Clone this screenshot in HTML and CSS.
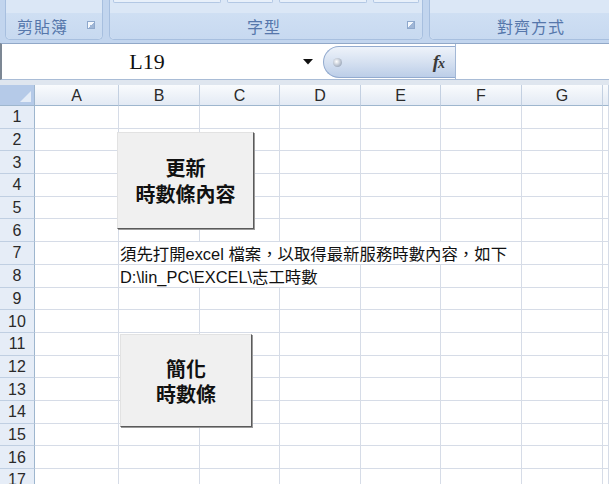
FILE: index.html
```html
<!DOCTYPE html>
<html lang="zh-Hant">
<head>
<meta charset="utf-8">
<title>Excel</title>
<link rel="stylesheet" href="styles.css">
</head>
<body>
<div class="ribbon">
  <div class="group g1">
    <div class="group-top"></div>
    <div class="group-label"><span class="label-text">剪貼簿</span><span class="launcher"></span></div>
  </div>
  <div class="group g2">
    <div class="group-top"><span class="tb w1"></span><span class="tb w2"></span><span class="tb w3"></span><span class="tb w2"></span></div>
    <div class="group-label"><span class="label-text center">字型</span><span class="launcher"></span></div>
  </div>
  <div class="group g3">
    <div class="group-top"></div>
    <div class="group-label"><span class="label-text center">對齊方式</span></div>
  </div>
</div>
<div class="formula-bar">
  <div class="namebox">
    <span class="name-text">L19</span>
    <svg class="arrow" width="10" height="6" viewBox="0 0 10 6"><path d="M0 0H10L5 5.5Z" fill="#111"/></svg>
  </div>
  <div class="pill">
    <span class="dot"></span>
    <span class="fx"><i>f</i><i class="fx-x">x</i></span>
  </div>
  <div class="formula-input"></div>
</div>
<div class="bar-gap"></div>
<div class="sheet">
  <div class="row header">
    <div class="corner"><svg width="11" height="11" viewBox="0 0 11 11"><path d="M11 0V11H0Z" fill="#e4ecf7"/></svg></div>
    <div class="ch">A</div><div class="ch">B</div><div class="ch">C</div><div class="ch">D</div><div class="ch">E</div><div class="ch">F</div><div class="ch">G</div><div class="ch"></div>
  </div>
  <div class="row"><div class="rh">1</div><div class="c"></div><div class="c"></div><div class="c"></div><div class="c"></div><div class="c"></div><div class="c"></div><div class="c"></div><div class="c"></div></div>
  <div class="row"><div class="rh">2</div><div class="c"></div><div class="c"></div><div class="c"></div><div class="c"></div><div class="c"></div><div class="c"></div><div class="c"></div><div class="c"></div></div>
  <div class="row"><div class="rh">3</div><div class="c"></div><div class="c"></div><div class="c"></div><div class="c"></div><div class="c"></div><div class="c"></div><div class="c"></div><div class="c"></div></div>
  <div class="row"><div class="rh">4</div><div class="c"></div><div class="c"></div><div class="c"></div><div class="c"></div><div class="c"></div><div class="c"></div><div class="c"></div><div class="c"></div></div>
  <div class="row"><div class="rh">5</div><div class="c"></div><div class="c"></div><div class="c"></div><div class="c"></div><div class="c"></div><div class="c"></div><div class="c"></div><div class="c"></div></div>
  <div class="row"><div class="rh">6</div><div class="c"></div><div class="c"></div><div class="c"></div><div class="c"></div><div class="c"></div><div class="c"></div><div class="c"></div><div class="c"></div></div>
  <div class="row"><div class="rh">7</div><div class="c"></div><div class="c text span5">須先打開excel 檔案，以取得最新服務時數內容，如下</div><div class="c"></div><div class="c"></div></div>
  <div class="row"><div class="rh">8</div><div class="c"></div><div class="c text span3">D:\lin_PC\EXCEL\志工時數</div><div class="c"></div><div class="c"></div><div class="c"></div><div class="c"></div></div>
  <div class="row"><div class="rh">9</div><div class="c"></div><div class="c"></div><div class="c"></div><div class="c"></div><div class="c"></div><div class="c"></div><div class="c"></div><div class="c"></div></div>
  <div class="row"><div class="rh">10</div><div class="c"></div><div class="c"></div><div class="c"></div><div class="c"></div><div class="c"></div><div class="c"></div><div class="c"></div><div class="c"></div></div>
  <div class="row"><div class="rh">11</div><div class="c"></div><div class="c"></div><div class="c"></div><div class="c"></div><div class="c"></div><div class="c"></div><div class="c"></div><div class="c"></div></div>
  <div class="row"><div class="rh">12</div><div class="c"></div><div class="c"></div><div class="c"></div><div class="c"></div><div class="c"></div><div class="c"></div><div class="c"></div><div class="c"></div></div>
  <div class="row"><div class="rh">13</div><div class="c"></div><div class="c"></div><div class="c"></div><div class="c"></div><div class="c"></div><div class="c"></div><div class="c"></div><div class="c"></div></div>
  <div class="row"><div class="rh">14</div><div class="c"></div><div class="c"></div><div class="c"></div><div class="c"></div><div class="c"></div><div class="c"></div><div class="c"></div><div class="c"></div></div>
  <div class="row"><div class="rh">15</div><div class="c"></div><div class="c"></div><div class="c"></div><div class="c"></div><div class="c"></div><div class="c"></div><div class="c"></div><div class="c"></div></div>
  <div class="row"><div class="rh">16</div><div class="c"></div><div class="c"></div><div class="c"></div><div class="c"></div><div class="c"></div><div class="c"></div><div class="c"></div><div class="c"></div></div>
  <div class="row"><div class="rh">17</div><div class="c"></div><div class="c"></div><div class="c"></div><div class="c"></div><div class="c"></div><div class="c"></div><div class="c"></div><div class="c"></div></div>

  <div class="btn btn-update"><span class="btn-line">更新</span><span class="btn-line">時數條內容</span></div>
  <div class="btn btn-simplify"><span class="btn-line">簡化</span><span class="btn-line">時數條</span></div>
</div>
</body>
</html>
```
FILE: styles.css
```css
* { box-sizing: border-box; }
html, body { margin: 0; padding: 0; }
body {
  width: 609px;
  height: 484px;
  overflow: hidden;
  background: #fff;
  font-family: "Liberation Sans", Arial, "Noto Sans CJK TC", sans-serif;
}

/* Ribbon */
.ribbon {
  height: 43px;
  background: #c2d5ee;
  display: flex;
  gap: 6px;
  padding-left: 5px;
  overflow: hidden;
}
.group {
  height: 40px;
  flex: none;
  border: 1px solid #a7bfdf;
  border-top: none;
  border-radius: 0 0 5px 5px;
  display: flex;
  flex-direction: column;
  background: #d3e2f4;
}
.g1 { width: 98px; }
.g2 { width: 314px; }
.g3 { width: 200px; }
.group-top {
  height: 13px;
  background: #dbe7f6;
  display: flex;
  gap: 6px;
  padding-left: 3px;
}
.tb {
  display: block;
  height: 3px;
  border: 1px solid #b3c8e4;
  border-top: none;
  border-radius: 0 0 2px 2px;
  background: #e8f0fa;
}
.w1 { width: 108px; }
.w2 { width: 46px; }
.w3 { width: 88px; }
.group-label {
  flex: 1;
  display: flex;
  align-items: center;
  padding: 0 7px 1px 11px;
  background: linear-gradient(#cfdff3, #c7d9f0);
  border-radius: 0 0 5px 5px;
}
.label-text {
  font-family: "Noto Sans CJK TC", sans-serif;
  font-size: 16px;
  letter-spacing: 1px;
  color: #5677ab;
  flex: 1;
}
.label-text.center { text-align: center; }
.launcher {
  width: 8px;
  height: 8px;
  border: 1px solid #8ea8cc;
  background: linear-gradient(135deg, #f4f8fd 50%, #9fb6d6 50%);
  margin-bottom: 1px;
}

/* Formula bar */
.formula-bar {
  height: 37px;
  border-top: 1px solid #91a8c8;
  border-bottom: 1px solid #a9bcd6;
  border-left: 2px solid #7c8794;
  display: flex;
  background: #fff;
}
.namebox {
  width: 321px;
  display: flex;
  align-items: center;
}
.name-text {
  width: 290px;
  text-align: center;
  font-family: "Liberation Serif", "Times New Roman", serif;
  font-size: 22px;
  color: #111;
}
.arrow { margin-left: 11px; margin-top: 1px; }
.pill {
  width: 132px;
  height: 32px;
  margin-top: 2px;
  border: 1px solid #93abcf;
  border-right: none;
  border-radius: 16px 0 0 16px;
  background: linear-gradient(#eef3fa, #d6e1f1 50%, #bccee8);
  display: flex;
  align-items: center;
  padding: 0 10px 0 9px;
}
.dot {
  width: 9px;
  height: 9px;
  border-radius: 50%;
  background: radial-gradient(circle at 40% 40%, #ffffff, #a3aebf 70%);
}
.fx {
  margin-left: auto;
  font-family: "Liberation Serif", "Times New Roman", serif;
  font-size: 19px;
  font-weight: bold;
  color: #3a3a3a;
}
.fx-x { font-size: 14px; margin-left: -1px; }
.formula-input {
  flex: 1;
  border-left: 1px solid #a3b8d6;
}
.bar-gap {
  height: 5px;
  background: #dfe6ef;
}

/* Sheet */
.sheet { position: relative; }
.row {
  display: grid;
  grid-template-columns: 35px 84px 81px 80px 81px 80px 81px 81px 1fr;
  height: 22.7px;
}
.row.header { height: 21px; }
.corner {
  background: #b5cae8;
  border-right: 1px solid #9eb6ce;
  border-bottom: 1px solid #9eb6ce;
  display: flex;
  align-items: flex-end;
  justify-content: flex-end;
  padding: 0 3px 3px 0;
}
.ch {
  background: linear-gradient(#f9fbfd, #e3eaf4);
  border-right: 1px solid #c3d0e1;
  border-bottom: 1px solid #9eb6ce;
  font-size: 16px;
  color: #2a2a2a;
  display: flex;
  align-items: center;
  justify-content: center;
  padding-top: 1px;
}
.rh {
  background: #e6edf7;
  border-right: 1px solid #9eb6ce;
  border-bottom: 1px solid #c0cfe2;
  font-size: 16px;
  color: #2a2a2a;
  display: flex;
  align-items: center;
  justify-content: center;
  padding-top: 1px;
}
.c {
  border-right: 1px solid #d6dce7;
  border-bottom: 1px solid #d6dce7;
}
.text {
  font-family: "Liberation Sans", Arial, "Noto Sans CJK TC", sans-serif;
  font-size: 16.4px;
  line-height: 20px;
  color: #111;
  white-space: nowrap;
  display: flex;
  align-items: flex-end;
  padding: 0 0 0 1px;
}
.span5 { grid-column: span 5; }
.span3 { grid-column: span 3; }

/* Buttons (overlaid form controls) */
.btn {
  position: absolute;
  background: #f0f0f0;
  border: 1px solid;
  border-color: #e2e2e2 #5a5a5a #5a5a5a #e2e2e2;
  box-shadow: 1px 1px 0 #9a9a9a;
  font-family: "Noto Sans CJK TC", sans-serif;
  font-weight: bold;
  font-size: 20px;
  color: #111;
  display: flex;
  flex-direction: column;
  align-items: center;
  justify-content: center;
  text-align: center;
}
.btn-line {
  display: block;
  height: 26px;
  line-height: 26px;
}
.btn-update { left: 117px; top: 47px; width: 137px; height: 97px; }
.btn-simplify { left: 120px; top: 249px; width: 132px; height: 93px; }
.btn-simplify .btn-line { height: 25px; line-height: 25px; }
```
